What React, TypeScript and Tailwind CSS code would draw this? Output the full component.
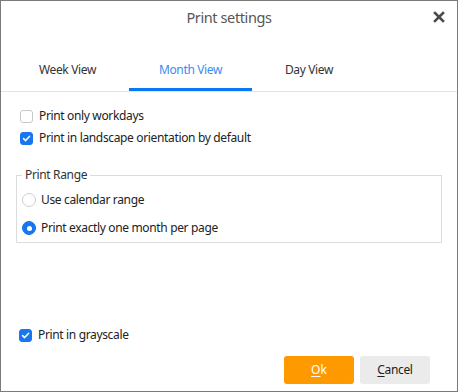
import { useState } from 'react';

const font = { fontFamily: '"Noto Sans", "Open Sans", sans-serif' };

function Checkbox({ checked, label, onToggle }: { checked: boolean; label: string; onToggle: () => void }) {
  return (
    <label className="flex h-[22px] items-center gap-[6px] cursor-default" onClick={onToggle}>
      <span
        className={`flex h-[13px] w-[13px] items-center justify-center rounded-[3px] border ${
          checked ? 'border-[#1677f0] bg-[#1677f0]' : 'border-[#c8c8c8] bg-white'
        }`}
      >
        {checked && (
          <svg width="9" height="9" viewBox="0 0 10 10" fill="none" stroke="white" strokeWidth="1.8" strokeLinecap="round" strokeLinejoin="round">
            <polyline points="1.8 5.2 4 7.3 8.3 2.7" />
          </svg>
        )}
      </span>
      <span className="text-[12px] tracking-[-0.35px] text-[#222]">{label}</span>
    </label>
  );
}

function Radio({ checked, label, onPick }: { checked: boolean; label: string; onPick: () => void }) {
  return (
    <label className="flex h-[28px] items-center gap-[5px] cursor-default" onClick={onPick}>
      <span
        className={`flex h-[14px] w-[14px] items-center justify-center rounded-full border ${
          checked ? 'border-[#1677f0] bg-[#1677f0]' : 'border-[#cfcfcf] bg-white'
        }`}
      >
        {checked && <span className="h-[5px] w-[5px] rounded-full bg-white" />}
      </span>
      <span className="text-[12px] tracking-[-0.35px] text-[#222]">{label}</span>
    </label>
  );
}

export default function App() {
  const [tab, setTab] = useState('month');
  const [workdays, setWorkdays] = useState(false);
  const [landscape, setLandscape] = useState(true);
  const [grayscale, setGrayscale] = useState(true);
  const [range, setRange] = useState('month');

  const tabs = [
    { id: 'week', label: 'Week View', w: 'w-[123px]' },
    { id: 'month', label: 'Month View', w: 'w-[123px]' },
    { id: 'day', label: 'Day View', w: 'w-[114px]' },
  ];

  return (
    <div className="flex h-[392px] w-[458px] flex-col border border-[#7b7b7b] bg-white" style={font}>
      {/* Header */}
      <div className="relative flex h-[33px] items-center justify-center">
        <span className="text-[14.5px] tracking-[-0.4px] text-[#555]">Print settings</span>
        <button className="absolute right-[12px] top-[10px] text-[#4a4a4a]">
          <svg width="12" height="12" viewBox="0 0 12 12" stroke="currentColor" strokeWidth="2.6" strokeLinecap="square">
            <line x1="2" y1="2" x2="10" y2="10" />
            <line x1="10" y1="2" x2="2" y2="10" />
          </svg>
        </button>
      </div>

      {/* Tabs */}
      <div className="mt-[22px] flex border-b border-[#e3e3e3] pl-[5px]">
        {tabs.map((t) => (
          <button
            key={t.id}
            onClick={() => setTab(t.id)}
            className={`${t.w} flex h-[35px] items-center justify-center border-b-[3px] pb-[4px] text-[12px] tracking-[-0.35px] ${
              tab === t.id ? 'border-[#0a78f5] text-[#3a8cf2]' : 'border-transparent text-[#333]'
            }`}
          >
            {t.label}
          </button>
        ))}
      </div>

      {/* Options */}
      <div className="mt-[13px] pl-[19px]">
        <Checkbox checked={workdays} label="Print only workdays" onToggle={() => setWorkdays(!workdays)} />
        <Checkbox checked={landscape} label="Print in landscape orientation by default" onToggle={() => setLandscape(!landscape)} />
      </div>

      {/* Print range group */}
      <div className="relative ml-[15px] mt-[26px] w-[426px] border border-[#dcdcdc] pl-[5px] pt-[10px]">
        <span className="absolute -top-[9px] left-[5px] bg-white px-[3px] text-[12px] leading-[16px] tracking-[-0.35px] text-[#333]">
          Print Range
        </span>
        <Radio checked={range === 'calendar'} label="Use calendar range" onPick={() => setRange('calendar')} />
        <Radio checked={range === 'month'} label="Print exactly one month per page" onPick={() => setRange('month')} />
      </div>

      <div className="flex-1" />

      <div className="mb-[10px] pl-[18px]">
        <Checkbox checked={grayscale} label="Print in grayscale" onToggle={() => setGrayscale(!grayscale)} />
      </div>

      {/* Footer */}
      <div className="mb-[7px] flex justify-end gap-[6px] pr-[27px]">
        <button className="h-[28px] w-[70px] rounded-[3px] bg-[#ff9900] text-[12px] text-white">
          <span className="underline underline-offset-2">O</span>k
        </button>
        <button className="h-[28px] w-[70px] rounded-[3px] bg-[#ebebeb] text-[12px] tracking-[-0.35px] text-[#222]">
          <span className="underline underline-offset-2">C</span>ancel
        </button>
      </div>
    </div>
  );
}
